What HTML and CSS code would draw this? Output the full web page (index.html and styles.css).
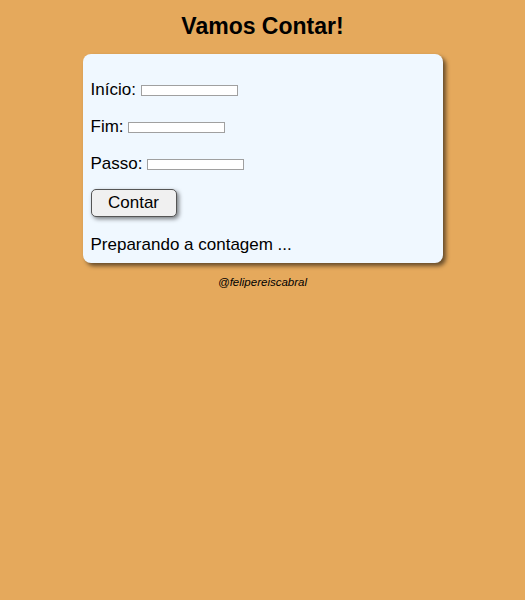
FILE: index.html
```html
<!DOCTYPE html>
<html lang="pt-BR">
<head>
<meta charset="utf-8">
<title>Vamos Contar!</title>
<link rel="stylesheet" href="styles.css">
</head>
<body>
<header class="top">
  <h1 class="title">Vamos Contar!</h1>
</header>
<section class="panel">
  <p class="row">Início: <input type="number" class="field" id="inicio"></p>
  <p class="row">Fim: <input type="number" class="field" id="fim"></p>
  <p class="row">Passo: <input type="number" class="field" id="passo"></p>
  <p class="row row-btn"><button class="btn" type="button">Contar</button></p>
  <div class="result">Preparando a contagem ...</div>
</section>
<footer class="foot">
  <p class="credit">@felipereiscabral</p>
</footer>
</body>
</html>
```
FILE: styles.css
```css
html, body {
  margin: 0;
  padding: 0;
}
body {
  background: #e5a95c;
  font-family: "Liberation Sans", Arial, sans-serif;
  color: #000;
}
.top {
  display: flex;
  justify-content: center;
}
.title {
  font-size: 23px;
  font-weight: bold;
  margin: 12px 0 14px;
  line-height: 28px;
}
.panel {
  width: 360px;
  box-sizing: border-box;
  margin: 0 auto;
  background: #f0f8ff;
  border-radius: 8px;
  box-shadow: 3px 3px 4px rgba(0, 0, 0, 0.55);
  padding: 9px 8px 8px 8px;
  font-size: 17px;
}
.row {
  margin: 16px 0 0;
  line-height: 21px;
}
.row-btn {
  margin-top: 15px;
}
.field {
  width: 97px;
  height: 11px;
  box-sizing: border-box;
  border: 1px solid #a0a0a0;
  background: #fff;
  padding: 0;
  margin: 0;
  vertical-align: middle;
  -moz-appearance: textfield;
  appearance: textfield;
}
.field::-webkit-inner-spin-button,
.field::-webkit-outer-spin-button {
  -webkit-appearance: none;
  margin: 0;
}
.btn {
  width: 86px;
  height: 28px;
  font-family: "Liberation Sans", Arial, sans-serif;
  font-size: 17px;
  color: #000;
  background: #f0f0f0;
  border: 1px solid #555;
  border-radius: 5px;
  box-shadow: 2px 2px 4px rgba(0, 0, 0, 0.5);
  padding: 0;
  margin: 0;
  display: block;
}
.result {
  line-height: 21px;
  margin-top: 17px;
}
.foot {
  display: flex;
  justify-content: center;
}
.credit {
  font-size: 11.5px;
  font-style: italic;
  margin: 12px 0 0;
  line-height: 14px;
}
```
